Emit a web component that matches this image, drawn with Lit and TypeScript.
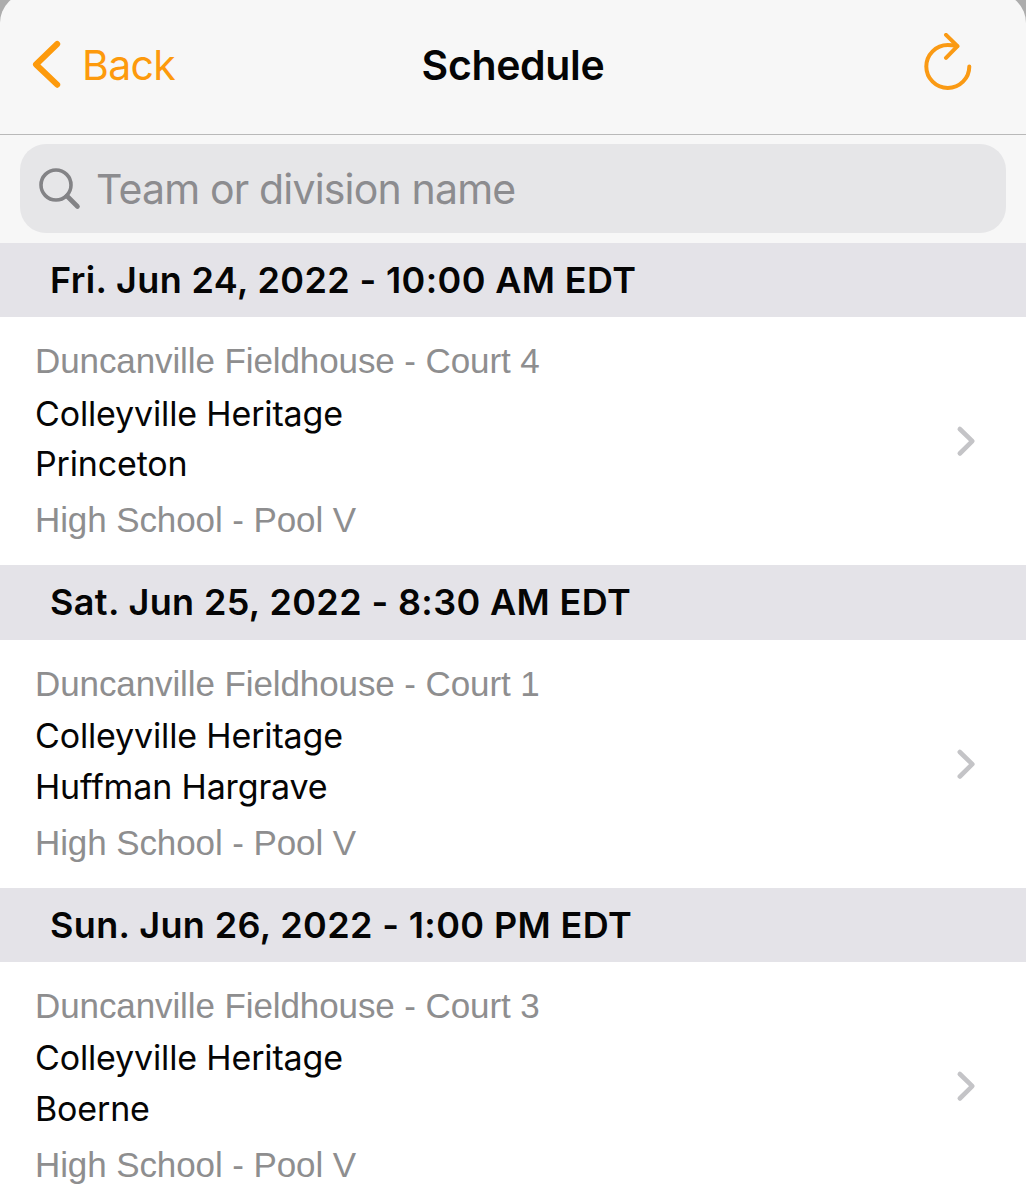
import { LitElement, html, css } from "lit";
import { customElement, property } from "lit/decorators.js";

interface Game {
  time: string;
  court: string;
  home: string;
  away: string;
  pool: string;
}

const GAMES: Game[] = [
  { time: "Fri. Jun 24, 2022 - 10:00 AM EDT", court: "Duncanville Fieldhouse - Court 4", home: "Colleyville Heritage", away: "Princeton", pool: "High School - Pool V" },
  { time: "Sat. Jun 25, 2022 - 8:30 AM EDT", court: "Duncanville Fieldhouse - Court 1", home: "Colleyville Heritage", away: "Huffman Hargrave", pool: "High School - Pool V" },
  { time: "Sun. Jun 26, 2022 - 1:00 PM EDT", court: "Duncanville Fieldhouse - Court 3", home: "Colleyville Heritage", away: "Boerne", pool: "High School - Pool V" },
];

@customElement("game-section")
class GameSection extends LitElement {
  @property({ attribute: false }) game!: Game;

  static styles = css`
    :host { display: block; font-family: Inter, "Liberation Sans", sans-serif; }
    .date {
      height: 74.3px; box-sizing: border-box; padding-left: 50px;
      background: #e4e3e8; color: #050505;
      font-size: 36px; font-weight: 600; line-height: 75px; letter-spacing: 0.37px;
      white-space: nowrap;
    }
    .row {
      height: 248px; box-sizing: border-box; padding: 17px 50px 0 35px;
      display: flex; justify-content: space-between; background: #fff;
    }
    .lines { display: flex; flex-direction: column; white-space: nowrap; }
    .meta {
      font-family: "Liberation Sans", Arial, sans-serif; color: #8e8e8f;
      font-size: 35px; line-height: 53px; letter-spacing: -0.1px;
    }
    .team { color: #050505; font-size: 34px; line-height: 50.5px; letter-spacing: -0.15px; }
    .home { padding-top: 1.5px; }
    .pool { padding-top: 3.5px; }
    .chevron { width: 20px; height: 32px; margin-top: 91px; }
  `;

  render() {
    const g = this.game;
    return html`
      <div class="date">${g.time}</div>
      <div class="row">
        <div class="lines">
          <div class="meta">${g.court}</div>
          <div class="team home">${g.home}</div>
          <div class="team">${g.away}</div>
          <div class="meta pool">${g.pool}</div>
        </div>
        <svg class="chevron" viewBox="0 0 20 32" fill="none" stroke="#c4c4c7" stroke-width="4.6" stroke-linecap="round" stroke-linejoin="round">
          <path d="M3.8 4 L16.3 16.2 L3.8 28.5" />
        </svg>
      </div>
    `;
  }
}

@customElement("app-root")
class AppRoot extends LitElement {
  static styles = css`
    :host {
      display: flow-root; width: 1026px; height: 1200px; overflow: hidden;
      background: #adadad; font-family: Inter, "Liberation Sans", sans-serif;
    }
    .sheet {
      background: #f7f7f7; border-radius: 30px 30px 0 0; overflow: hidden;
      box-sizing: border-box; height: 1207px; margin-top: -7px; padding-top: 7px;
    }
    .nav {
      height: 135px; box-sizing: border-box; border-bottom: 1px solid #b9b9b9;
      padding: 0 53px 5px 32px; display: grid; grid-template-columns: 1fr auto 1fr; align-items: center;
    }
    .back { display: flex; align-items: center; gap: 20px; color: #fd9a0c; font-size: 41px; line-height: 50px; letter-spacing: -0.65px; }
    .back svg { width: 30px; height: 50px; }
    .title { color: #050505; font-size: 41px; font-weight: 600; line-height: 50px; margin-left: 21px; letter-spacing: -0.35px; }
    .refresh { justify-self: end; width: 50px; height: 60px; margin-bottom: 4px; }
    .search {
      height: 89px; margin: 9px 20px 10px; border-radius: 26px; background: #e6e6e8;
      display: flex; align-items: center; gap: 14px; padding-left: 18px; box-sizing: border-box;
      color: #8c8c8f; font-size: 41px; line-height: 50px; letter-spacing: -0.82px;
    }
    .search svg { width: 44px; height: 44px; }
  `;

  render() {
    return html`
      <div class="sheet">
        <header class="nav">
          <div class="back">
            <svg viewBox="0 0 30 50" fill="none" stroke="#fd9a0c" stroke-width="6" stroke-linecap="round" stroke-linejoin="round">
              <path d="M25.2 4 L4 24.5 L25.2 44.7" />
            </svg>
            <span class="back-label">Back</span>
          </div>
          <div class="title">Schedule</div>
          <svg class="refresh" viewBox="0 0 50 60" fill="none" stroke="#fa9a14" stroke-width="4" stroke-linecap="round" stroke-linejoin="round">
            <path d="M46.3 33.5 A21.5 21.5 0 1 1 24.8 12 C28.5 12 31 12.5 34 13.3" />
            <path d="M23 1.8 L34.5 13.2 L23 24.8" />
          </svg>
        </header>
        <div class="search">
          <svg viewBox="0 0 44 44" fill="none" stroke="#838386" stroke-width="3.6" stroke-linecap="round">
            <circle cx="18" cy="18" r="15" />
            <path d="M29 29 L39.5 39.5" stroke-width="4.6" />
          </svg>
          <span class="placeholder">Team or division name</span>
        </div>
        ${GAMES.map((g) => html`<game-section .game=${g}></game-section>`)}
      </div>
    `;
  }
}
